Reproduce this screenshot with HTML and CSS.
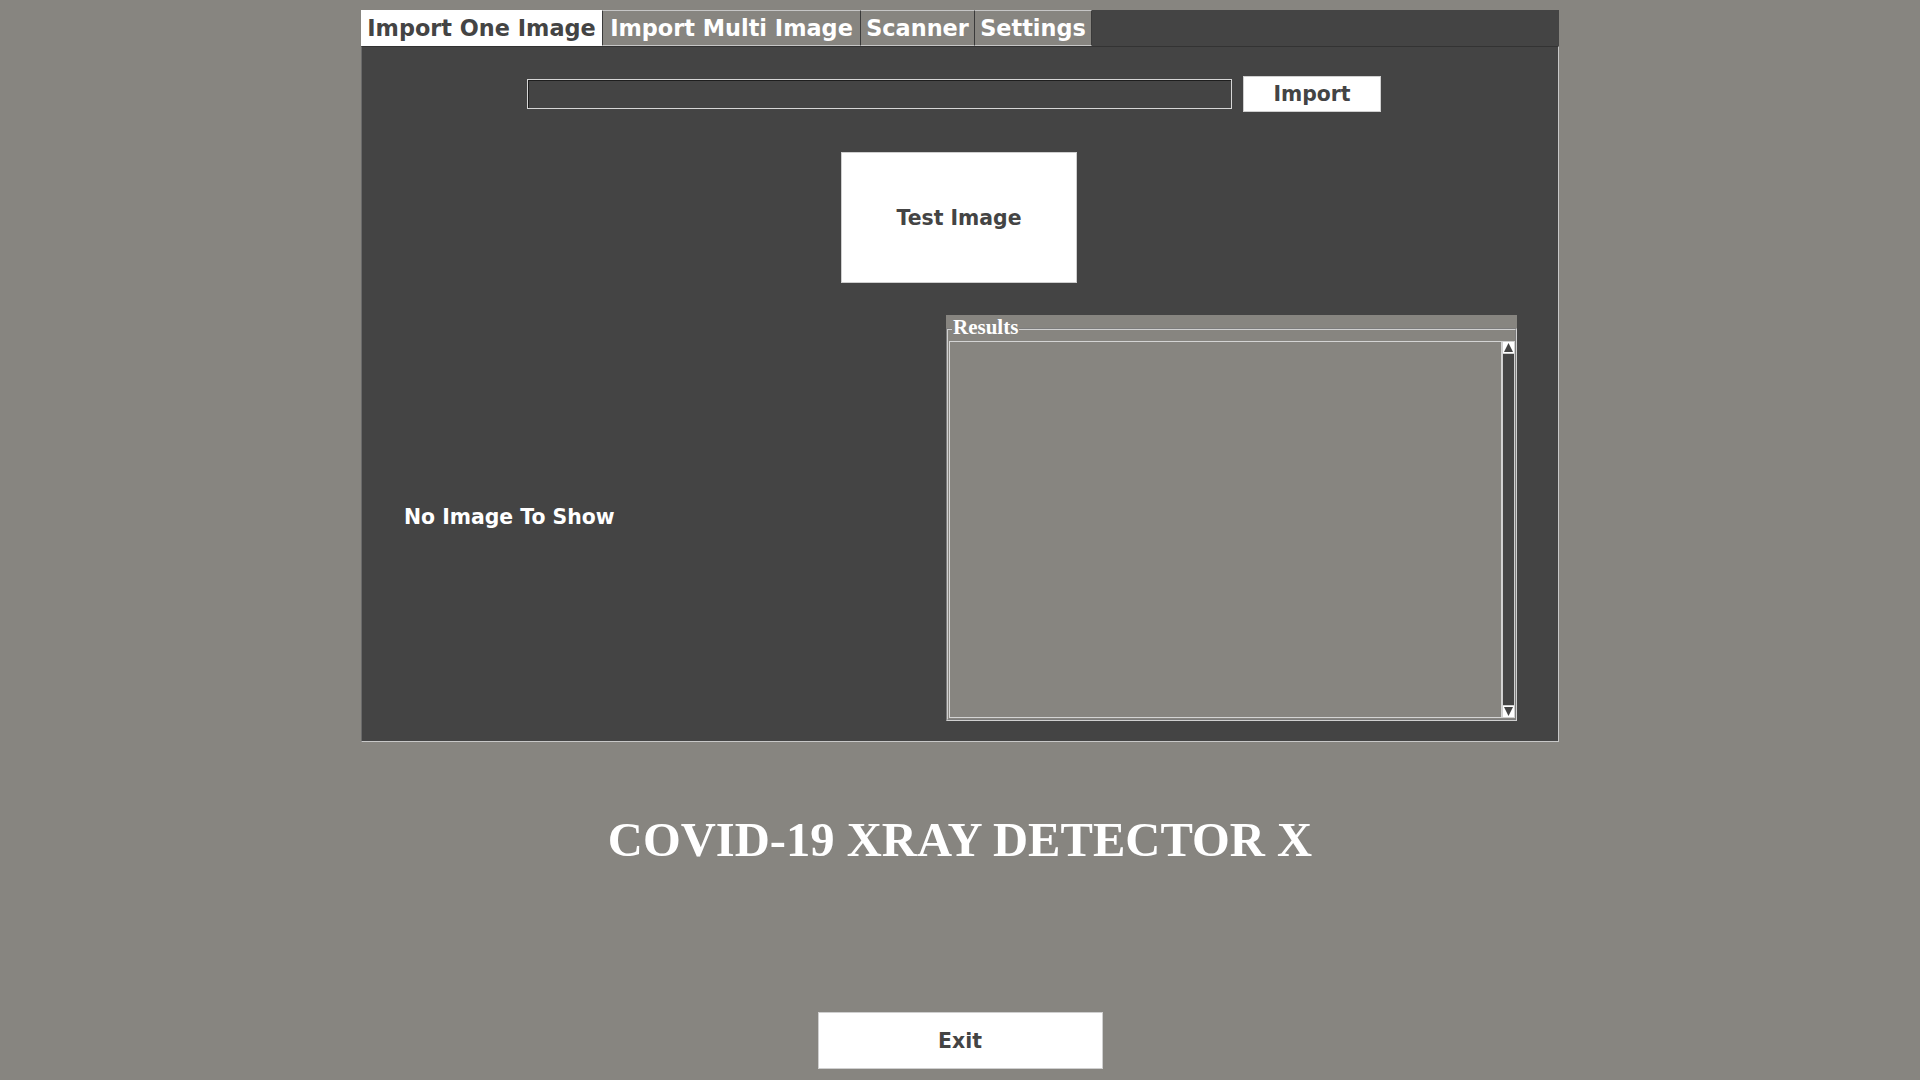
FILE: index.html
```html
<!DOCTYPE html>
<html>
<head>
<meta charset="utf-8">
<title>COVID-19 XRAY DETECTOR X</title>
<link rel="stylesheet" href="styles.css">
</head>
<body>
<div class="notebook">
  <div class="tabs">
    <div class="tab tab-active tab-one">Import One Image</div>
    <div class="tab tab-multi">Import Multi Image</div>
    <div class="tab tab-scan">Scanner</div>
    <div class="tab tab-set">Settings</div>
  </div>
  <div class="panel">
    <div class="import-row">
      <div class="path-input"></div>
      <button class="btn btn-import">Import</button>
    </div>
    <div class="test-row">
      <button class="btn btn-test">Test Image</button>
    </div>
    <div class="lower">
      <div class="preview"><span>No Image To Show</span></div>
      <div class="results">
        <span class="results-label">Results</span>
        <div class="results-box">
          <div class="results-text"></div>
          <div class="scrollbar">
            <div class="sb-arrow">
              <svg width="11" height="11" viewBox="0 0 11 11"><polygon points="5.5,1 10,10 1,10" fill="#444"/></svg>
            </div>
            <div class="sb-trough"></div>
            <div class="sb-arrow">
              <svg width="11" height="11" viewBox="0 0 11 11"><polygon points="1,1 10,1 5.5,10" fill="#444"/></svg>
            </div>
          </div>
        </div>
      </div>
    </div>
  </div>
</div>
<h1 class="title">COVID-19 XRAY DETECTOR X</h1>
<button class="btn btn-exit">Exit</button>
</body>
</html>
```

FILE: styles.css
```css
html, body {
  margin: 0;
  padding: 0;
}
body {
  background: #878580;
  height: 1080px;
  overflow: hidden;
  font-family: "DejaVu Sans", sans-serif;
}
.notebook {
  width: 1198px;
  margin: 10px auto 0;
}
.tabs {
  display: flex;
  height: 36px;
  background: #444444;
}
.tab {
  box-sizing: border-box;
  height: 36px;
  font-family: "DejaVu Sans", sans-serif;
  font-weight: bold;
  font-size: 22.4px;
  line-height: 34px;
  color: #ffffff;
  background: #878580;
  border-top: 1px solid #c6c6c6;
  border-bottom: 1px solid #c6c6c6;
  border-right: 1px solid #3a3a3a;
  text-align: center;
  white-space: nowrap;
}
.tab-active {
  background: #ffffff;
  color: #444444;
  border-top-color: #ffffff;
  border-bottom-color: #ffffff;
}
.tab-one { width: 242px; }
.tab-multi { width: 258px; }
.tab-scan { width: 114px; }
.tab-set { width: 117px; }

.panel {
  box-sizing: border-box;
  height: 696px;
  background: #444444;
  border-top: 1px solid #333333;
  border-left: 1px solid #6a6a6a;
  border-right: 1px solid #c8c8c8;
  border-bottom: 1px solid #c8c8c8;
}
.import-row {
  display: flex;
  align-items: center;
  gap: 11px;
  margin: 29px 0 0 165px;
}
.path-input {
  box-sizing: border-box;
  width: 705px;
  height: 30px;
  background: #444444;
  border: 1px solid #d6d6d6;
  box-shadow: inset 1px 1px 0 #1e1e1e;
}
.btn {
  box-sizing: border-box;
  background: #ffffff;
  border: 1px solid #cfcfcf;
  color: #444444;
  font-family: "DejaVu Sans", sans-serif;
  font-weight: bold;
  font-size: 20.4px;
  padding: 0;
  margin: 0;
}
.btn-import {
  width: 138px;
  height: 36px;
}
.test-row {
  margin-top: 40px;
  padding-left: 479px;
}
.btn-test {
  width: 236px;
  height: 131px;
  display: block;
}
.lower {
  display: flex;
  margin-top: 32px;
}
.preview {
  box-sizing: border-box;
  width: 584px;
  height: 404px;
  display: flex;
  align-items: center;
  padding-left: 42px;
  color: #ffffff;
  font-weight: bold;
  font-size: 20.4px;
}
.results {
  position: relative;
  box-sizing: border-box;
  width: 571px;
  height: 406px;
  background: #878580;
}
.results-label {
  position: absolute;
  left: 6px;
  top: 2px;
  padding: 0 1px;
  background: #878580;
  color: #ffffff;
  font-family: "Liberation Serif", serif;
  font-weight: bold;
  font-size: 21px;
  line-height: 21px;
}
.results-box {
  box-sizing: border-box;
  display: flex;
  margin-top: 13px;
  height: 393px;
  border: 2px groove #d0d0d0;
  padding: 11px 0 1px 1px;
}
.results-text {
  flex: 1;
  box-sizing: border-box;
  border: 1px solid #d4d4d4;
  background: #878580;
}
.scrollbar {
  box-sizing: border-box;
  width: 13px;
  display: flex;
  flex-direction: column;
  border: 1px solid #d0d0d0;
  background: #444444;
}
.sb-arrow {
  height: 11px;
  background: #ffffff;
  display: flex;
  align-items: center;
  justify-content: center;
  overflow: hidden;
}
.sb-arrow svg {
  display: block;
}
.sb-trough {
  flex: 1;
  background: #444444;
  border-top: 1px solid #d0d0d0;
  border-bottom: 1px solid #d0d0d0;
}
.title {
  margin: 74px 0 0;
  text-align: center;
  color: #ffffff;
  font-family: "Liberation Serif", serif;
  font-weight: bold;
  font-size: 48.6px;
  line-height: 48px;
}
.btn-exit {
  display: block;
  margin: 148px auto 0;
  width: 285px;
  height: 57px;
}
```
